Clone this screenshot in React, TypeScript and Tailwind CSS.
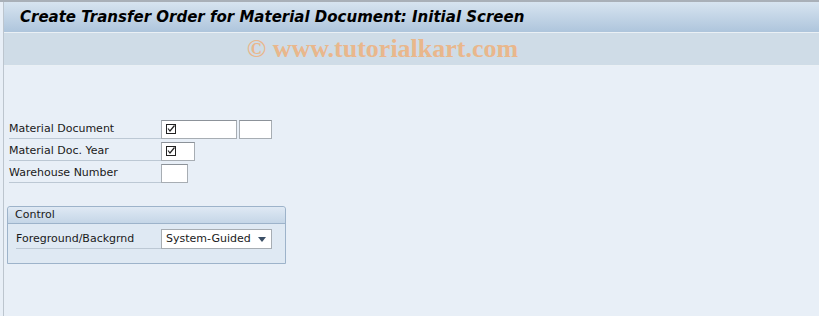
const CheckMark = () => (
  <svg width="10" height="10" viewBox="0 0 10 10" className="block">
    <rect x="0.5" y="0.5" width="9" height="9" fill="none" stroke="#222" strokeWidth="1" />
    <path d="M2 4.5 L4 7 L8.5 1.5" fill="none" stroke="#222" strokeWidth="1.2" />
  </svg>
);

function Field({ w, check }: { w: string; check?: boolean }) {
  return (
    <div
      className={`${w} h-[19px] bg-white border border-[#a7adb3] border-t-[#8c9299] flex items-center pl-[4px]`}
    >
      {check && <CheckMark />}
    </div>
  );
}

function Row({ label, children }: { label: string; children: React.ReactNode }) {
  return (
    <div className="flex items-center h-[22px]">
      <div className="w-[152px] ml-[5px] h-[19px] border-b border-[#bcc8d4] text-[11px] leading-[18px] text-[#1a1a1a]">
        {label}
      </div>
      <div className="flex gap-[2px]">{children}</div>
    </div>
  );
}

export default function App() {
  return (
    <div
      className="w-[819px] h-[316px] bg-[#e8eff7] overflow-hidden border-t-2 border-[#a9b0b8] pl-[3px]"
      style={{ fontFamily: '"DejaVu Sans", Tahoma, sans-serif' }}
    >
      <div className="h-full border-l border-[#bcc5ce] flex flex-col">
        <div className="h-[30px] bg-gradient-to-b from-[#d7e4f0] to-[#aec5dc] flex items-center pl-[16px]">
          <span className="text-[15px] font-bold italic text-black">
            Create Transfer Order for Material Document: Initial Screen
          </span>
        </div>
        <div className="h-[34px] bg-[#cfdce7] border-t border-[#eaf0f5] border-b border-[#a6b3bf] flex items-center justify-center pr-[58px]">
          <span
            className="text-[26px] leading-[30px] font-bold text-[#e9b78c]"
            style={{ fontFamily: '"Liberation Serif", "Times New Roman", serif' }}
          >
            © www.tutorialkart.com
          </span>
        </div>
        <div className="flex-1 pt-[52px]">
          <Row label="Material Document">
            <Field w="w-[76px]" check />
            <Field w="w-[33px]" />
          </Row>
          <Row label="Material Doc. Year">
            <Field w="w-[34px]" check />
          </Row>
          <Row label="Warehouse Number">
            <Field w="w-[27px]" />
          </Row>

          <div className="mt-[22px] ml-[3px] w-[279px] h-[58px] border border-[#9db3ca] rounded-t-[3px] bg-[#dfe9f3] flex flex-col">
            <div className="h-[17px] bg-gradient-to-b from-[#dfe9f4] to-[#c5d6e7] border-b border-[#9db3ca] pl-[7px] text-[11px] leading-[16px] text-[#1a1a1a] rounded-t-[3px]">
              Control
            </div>
            <div className="flex items-center h-[26px] pt-[4px]">
              <div className="w-[145px] ml-[8px] h-[19px] border-b border-[#bcc8d4] text-[11px] leading-[18px] text-[#1a1a1a]">
                Foreground/Backgrnd
              </div>
              <div className="w-[111px] h-[20px] bg-white border border-[#a7adb3] flex items-center justify-between pl-[4px] pr-[5px]">
                <span className="text-[11px] text-[#1a1a1a]">System-Guided</span>
                <svg width="8" height="5" viewBox="0 0 8 5">
                  <path d="M0 0 H8 L4 5 Z" fill="#3b4f66" />
                </svg>
              </div>
            </div>
          </div>
        </div>
      </div>
    </div>
  );
}
